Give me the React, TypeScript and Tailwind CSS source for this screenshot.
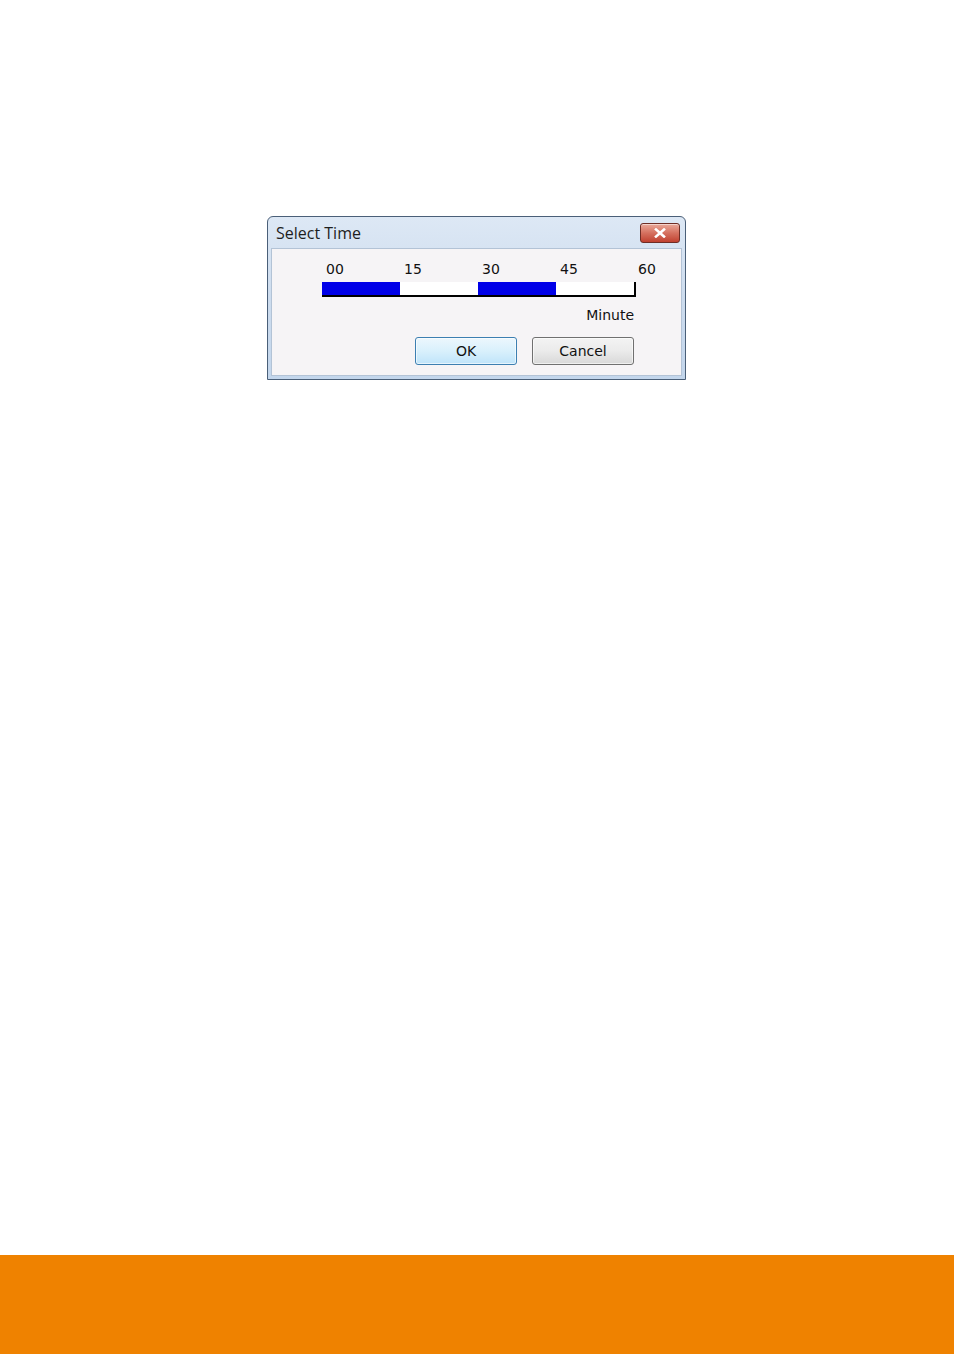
import React from 'react'

const SEGMENTS = [true, false, true, false]
const LABELS = ['00', '15', '30', '45']

function CloseButton() {
  return (
    <button className="flex h-[20px] w-[40px] items-center justify-center rounded-[3px] border border-[#6e2d25] bg-gradient-to-b from-[#e9a99b] via-[#d5705f] to-[#c0402f] shadow-[inset_0_1px_0_rgba(255,255,255,0.5)]">
      <svg width="12" height="10" viewBox="0 0 12 10">
        <path d="M2 1.5 L10 8.5 M10 1.5 L2 8.5" stroke="#ffffff" strokeWidth="2.6" strokeLinecap="square" />
      </svg>
    </button>
  )
}

function SelectTimeDialog() {
  return (
    <div className="ml-[267px] mt-[216px] w-[419px] rounded-t-[6px] border border-[#4a5f78] bg-gradient-to-b from-[#dde8f5] via-[#cddcee] to-[#c3d6ec] px-[3px] pb-[3px]">
      {/* Title bar */}
      <div className="flex h-[31px] items-center justify-between pl-[5px] pr-[2px]">
        <span className="text-[16px] leading-none text-[#1e1e1e] [font-family:'Open_Sans',sans-serif]">Select Time</span>
        <CloseButton />
      </div>

      {/* Body */}
      <div className="border border-[#b3c3d6] bg-[#f6f4f6] pb-[10px] pl-[50px] pt-[12px] [font-family:'DejaVu_Sans',sans-serif] text-[14px] text-[#111]">
        <div className="w-[340px]">
          <div className="flex h-[16px] items-center leading-none">
            {LABELS.map((l) => (
              <span key={l} className="w-[78px] shrink-0 pl-[4px]">
                {l}
              </span>
            ))}
            <span className="shrink-0 pl-[4px]">60</span>
          </div>

          <div className="mt-[5px] flex h-[15px] w-[314px] border-b-2 border-black">
            {SEGMENTS.map((on, i) => (
              <div key={i} className={on ? 'h-full w-[78px] bg-[#0000e8]' : 'h-full w-[78px] bg-white'} />
            ))}
            <div className="h-full w-[2px] bg-black" />
          </div>

          <div className="mt-[10px] flex h-[16px] w-[312px] items-center justify-end leading-none">Minute</div>

          <div className="mt-[14px] flex w-[312px] justify-end gap-[15px]">
            <button className="h-[28px] w-[102px] rounded-[3px] border border-[#3c7fb1] bg-gradient-to-b from-[#ecf7fd] via-[#d9f0fc] to-[#bfe4fa] leading-none shadow-[inset_0_0_0_1px_rgba(255,255,255,0.6)]">
              OK
            </button>
            <button className="h-[28px] w-[102px] rounded-[3px] border border-[#707070] bg-gradient-to-b from-[#f3f3f3] via-[#ebebeb] to-[#d8d8d8] leading-none shadow-[inset_0_0_0_1px_rgba(255,255,255,0.6)]">
              Cancel
            </button>
          </div>
        </div>
      </div>
    </div>
  )
}

export default function App() {
  return (
    <div className="flex h-[1354px] w-full flex-col bg-white">
      <SelectTimeDialog />
      <div className="flex-1" />
      <div className="h-[99px] w-full bg-[#ef8200]" />
    </div>
  )
}
